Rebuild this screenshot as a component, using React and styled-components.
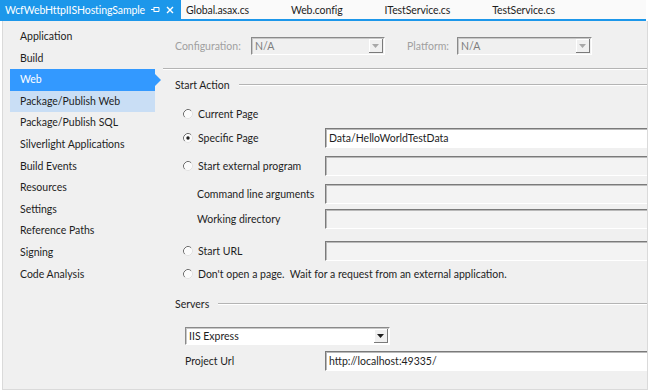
import React from 'react';
import styled, { createGlobalStyle } from 'styled-components';

const GlobalStyle = createGlobalStyle`
  html, body {
    margin: 0;
    padding: 0;
    background: #ffffff;
  }
  body {
    font-family: "Segoe UI", Lato, "Noto Sans", sans-serif;
    font-size: 10.5px;
    color: #1e1e1e;
  }
`;

const Window = styled.div`
  width: 650px;
  height: 390px;
  overflow: hidden;
  display: flex;
  flex-direction: column;
  background: #ffffff;
`;

const TabStrip = styled.div`
  width: 646px;
  height: 19px;
  display: flex;
  align-items: stretch;
  background: #fafafa;
  border-bottom: 2px solid #1c97ea;
  flex-shrink: 0;
  font-size: 10.5px;
`;

const Tab = styled.div`
  display: flex;
  align-items: center;
  gap: 5px;
  padding: ${p => (p.$active ? '0 6px 0 5px' : '0 37px 0 5px')};
  background: ${p => (p.$active ? '#1c97ea' : 'transparent')};
  color: ${p => (p.$active ? '#ffffff' : '#1e1e1e')};
  white-space: nowrap;
  letter-spacing: -0.1px;
`;

const TabIcon = styled.span`
  display: flex;
  align-items: center;
  width: 10px;
  justify-content: center;
`;

const Body = styled.div`
  flex: 1;
  display: flex;
  width: 644px;
  margin-left: 2px;
  background: #f0f0f0;
  border-left: 1px solid #dadada;
  border-right: 1px solid #dadada;
  border-bottom: 1px solid #dadada;
  overflow: hidden;
`;

const Nav = styled.div`
  width: 157px;
  flex-shrink: 0;
  padding-top: 5px;
`;

const NavItem = styled.div`
  position: relative;
  height: 21.6px;
  line-height: 21.6px;
  margin-left: 7px;
  width: 145px;
  padding-left: 10px;
  box-sizing: border-box;
  white-space: nowrap;
  background: ${p => (p.$selected ? '#3399ff' : p.$hover ? '#c9def5' : 'transparent')};
  color: ${p => (p.$selected ? '#ffffff' : '#1e1e1e')};

  &::after {
    content: '';
    display: ${p => (p.$selected ? 'block' : 'none')};
    position: absolute;
    right: -6px;
    top: 50%;
    margin-top: -6px;
    border-left: 6px solid #3399ff;
    border-top: 6px solid transparent;
    border-bottom: 6px solid transparent;
  }
`;

const Content = styled.div`
  flex: 1;
  padding-left: 15px;
  overflow: hidden;
`;

const ConfigRow = styled.div`
  display: flex;
  align-items: center;
  height: 18px;
  margin-top: 16px;
`;

const DimLabel = styled.span`
  color: #a0a0a0;
  width: ${p => p.$w}px;
  margin-left: ${p => p.$ml || 0}px;
  flex-shrink: 0;
`;

const Combo = styled.div`
  position: relative;
  width: ${p => p.$w}px;
  height: 18px;
  box-sizing: border-box;
  display: flex;
  align-items: center;
  margin-left: ${p => p.$ml || 0}px;
  padding-left: 3px;
  background: ${p => (p.$disabled ? '#f0f0f0' : '#ffffff')};
  color: ${p => (p.$disabled ? '#7d7d7d' : '#1e1e1e')};
  border-top: 1px solid #8a8a8a;
  border-left: 1px solid #8a8a8a;
  border-right: 1px solid #ffffff;
  border-bottom: 1px solid #ffffff;
  box-shadow: inset 1px 1px 0 #c8c8c8;
`;

const ComboButton = styled.span`
  position: absolute;
  right: 1px;
  top: 1px;
  bottom: 1px;
  width: 13px;
  display: flex;
  align-items: center;
  justify-content: center;
  background: #f0f0f0;
  border-right: 1px solid #7a7a7a;
  border-bottom: 1px solid #7a7a7a;
  box-shadow: inset 1px 1px 0 #ffffff;
`;

const Separator = styled.div`
  margin-top: 13px;
  margin-left: -12px;
  border-top: 1px solid #b4b4b4;
  border-bottom: 1px solid #ffffff;
`;

const GroupHeader = styled.div`
  display: flex;
  align-items: center;
  gap: 9px;
  height: 16px;
  margin-top: ${p => p.$mt}px;

  &::after {
    content: '';
    flex: 1;
    border-top: 1px solid #b4b4b4;
    border-bottom: 1px solid #ffffff;
  }
`;

const Row = styled.div`
  display: flex;
  align-items: center;
  height: ${p => p.$h || 20}px;
  margin-top: ${p => p.$mt}px;
  margin-left: ${p => p.$ml || 0}px;
`;

const RowLabel = styled.div`
  display: flex;
  align-items: center;
  gap: 5px;
  width: ${p => p.$w}px;
  flex-shrink: 0;
  padding-left: ${p => p.$pl || 0}px;
  box-sizing: border-box;
  white-space: pre;
`;

const TextBox = styled.div`
  flex: 1;
  height: 20px;
  box-sizing: border-box;
  display: flex;
  align-items: center;
  padding-left: 3px;
  white-space: nowrap;
  background: ${p => (p.$disabled ? '#f3f3f3' : '#ffffff')};
  border-top: 1px solid #7a7a7a;
  border-left: 1px solid #7a7a7a;
  border-bottom: 1px solid #ffffff;
  box-shadow: inset 1px 1px 0 #b9b9b9;
`;

const Radio = ({ checked }) => (
  <svg width="10" height="10" viewBox="0 0 10 10">
    <circle cx="5" cy="5" r="4.5" fill="#fbfbfb" />
    <path d="M1.82 8.18 A4.5 4.5 0 0 1 8.18 1.82" fill="none" stroke="#6f6f6f" strokeWidth="1" />
    <path d="M8.18 1.82 A4.5 4.5 0 0 1 1.82 8.18" fill="none" stroke="#e2e2e2" strokeWidth="1" />
    {checked && <circle cx="5" cy="5" r="1.7" fill="#1e1e1e" />}
  </svg>
);

const CheckBox = styled.span`
  width: 10px;
  height: 10px;
  box-sizing: border-box;
  background: #ffffff;
  border-top: 1px solid #6f6f6f;
  border-left: 1px solid #6f6f6f;
  border-right: 1px solid #e2e2e2;
  border-bottom: 1px solid #e2e2e2;
  margin-left: 8px;
`;

const Arrow = ({ color }) => (
  <svg width="7" height="4" viewBox="0 0 7 4">
    <path d="M0 0 H7 L3.5 4 Z" fill={color} />
  </svg>
);

const navItems = [
  'Application',
  'Build',
  'Web',
  'Package/Publish Web',
  'Package/Publish SQL',
  'Silverlight Applications',
  'Build Events',
  'Resources',
  'Settings',
  'Reference Paths',
  'Signing',
  'Code Analysis',
];

const tabs = ['Global.asax.cs', 'Web.config', 'ITestService.cs', 'TestService.cs'];

const App = () => (
  <Window>
    <GlobalStyle />
    <TabStrip>
      <Tab $active>
        WcfWebHttpIISHostingSample
        <TabIcon>
          <svg width="9" height="7" viewBox="0 0 9 7">
            <path d="M0 3.5 H3 M3 1 V6 M3 1.5 H8 V5.5 H3" fill="none" stroke="#ffffff" strokeWidth="1" />
          </svg>
        </TabIcon>
        <TabIcon>
          <svg width="8" height="8" viewBox="0 0 8 8">
            <path d="M1 1 L7 7 M7 1 L1 7" stroke="#ffffff" strokeWidth="1.4" />
          </svg>
        </TabIcon>
      </Tab>
      {tabs.map(t => (
        <Tab key={t}>{t}</Tab>
      ))}
    </TabStrip>
    <Body>
      <Nav>
        {navItems.map(item => (
          <NavItem
            key={item}
            $selected={item === 'Web'}
            $hover={item === 'Package/Publish Web'}
          >
            {item}
          </NavItem>
        ))}
      </Nav>
      <Content>
        <ConfigRow>
          <DimLabel $w={76}>Configuration:</DimLabel>
          <Combo $w={134} $disabled>
            N/A
            <ComboButton>
              <Arrow color="#a8a8a8" />
            </ComboButton>
          </Combo>
          <DimLabel $w={50} $ml={22}>Platform:</DimLabel>
          <Combo $w={135} $disabled>
            N/A
            <ComboButton>
              <Arrow color="#a8a8a8" />
            </ComboButton>
          </Combo>
        </ConfigRow>
        <Separator />
        <GroupHeader $mt={7}>Start Action</GroupHeader>

        <Row $mt={11}>
          <RowLabel $w={150} $pl={8}>
            <Radio />
            Current Page
          </RowLabel>
        </Row>
        <Row $mt={4}>
          <RowLabel $w={150} $pl={8}>
            <Radio checked />
            Specific Page
          </RowLabel>
          <TextBox>Data/HelloWorldTestData</TextBox>
        </Row>
        <Row $mt={8}>
          <RowLabel $w={150} $pl={8}>
            <Radio />
            Start external program
          </RowLabel>
          <TextBox $disabled />
        </Row>
        <Row $mt={8}>
          <RowLabel $w={150} $pl={22}>Command line arguments</RowLabel>
          <TextBox $disabled />
        </Row>
        <Row $mt={5}>
          <RowLabel $w={150} $pl={22}>Working directory</RowLabel>
          <TextBox $disabled />
        </Row>
        <Row $mt={12}>
          <RowLabel $w={150} $pl={8}>
            <Radio />
            Start URL
          </RowLabel>
          <TextBox $disabled />
        </Row>
        <Row $mt={3}>
          <RowLabel $w={480} $pl={8}>
            <Radio />
            {"Don't open a page.  Wait for a request from an external application."}
          </RowLabel>
        </Row>

        <GroupHeader $mt={12}>Servers</GroupHeader>
        <Row $mt={15} $ml={10} $h={18}>
          <Combo $w={205}>
            IIS Express
            <ComboButton>
              <Arrow color="#1e1e1e" />
            </ComboButton>
          </Combo>
        </Row>
        <Row $mt={6} $ml={10}>
          <RowLabel $w={140}>Project Url</RowLabel>
          <TextBox>http://localhost:49335/</TextBox>
        </Row>
        <Row $mt={15}>
          <RowLabel $w={300} $pl={10}>
            <CheckBox />
            Override application root URL
          </RowLabel>
        </Row>
      </Content>
    </Body>
  </Window>
);

export default App;
